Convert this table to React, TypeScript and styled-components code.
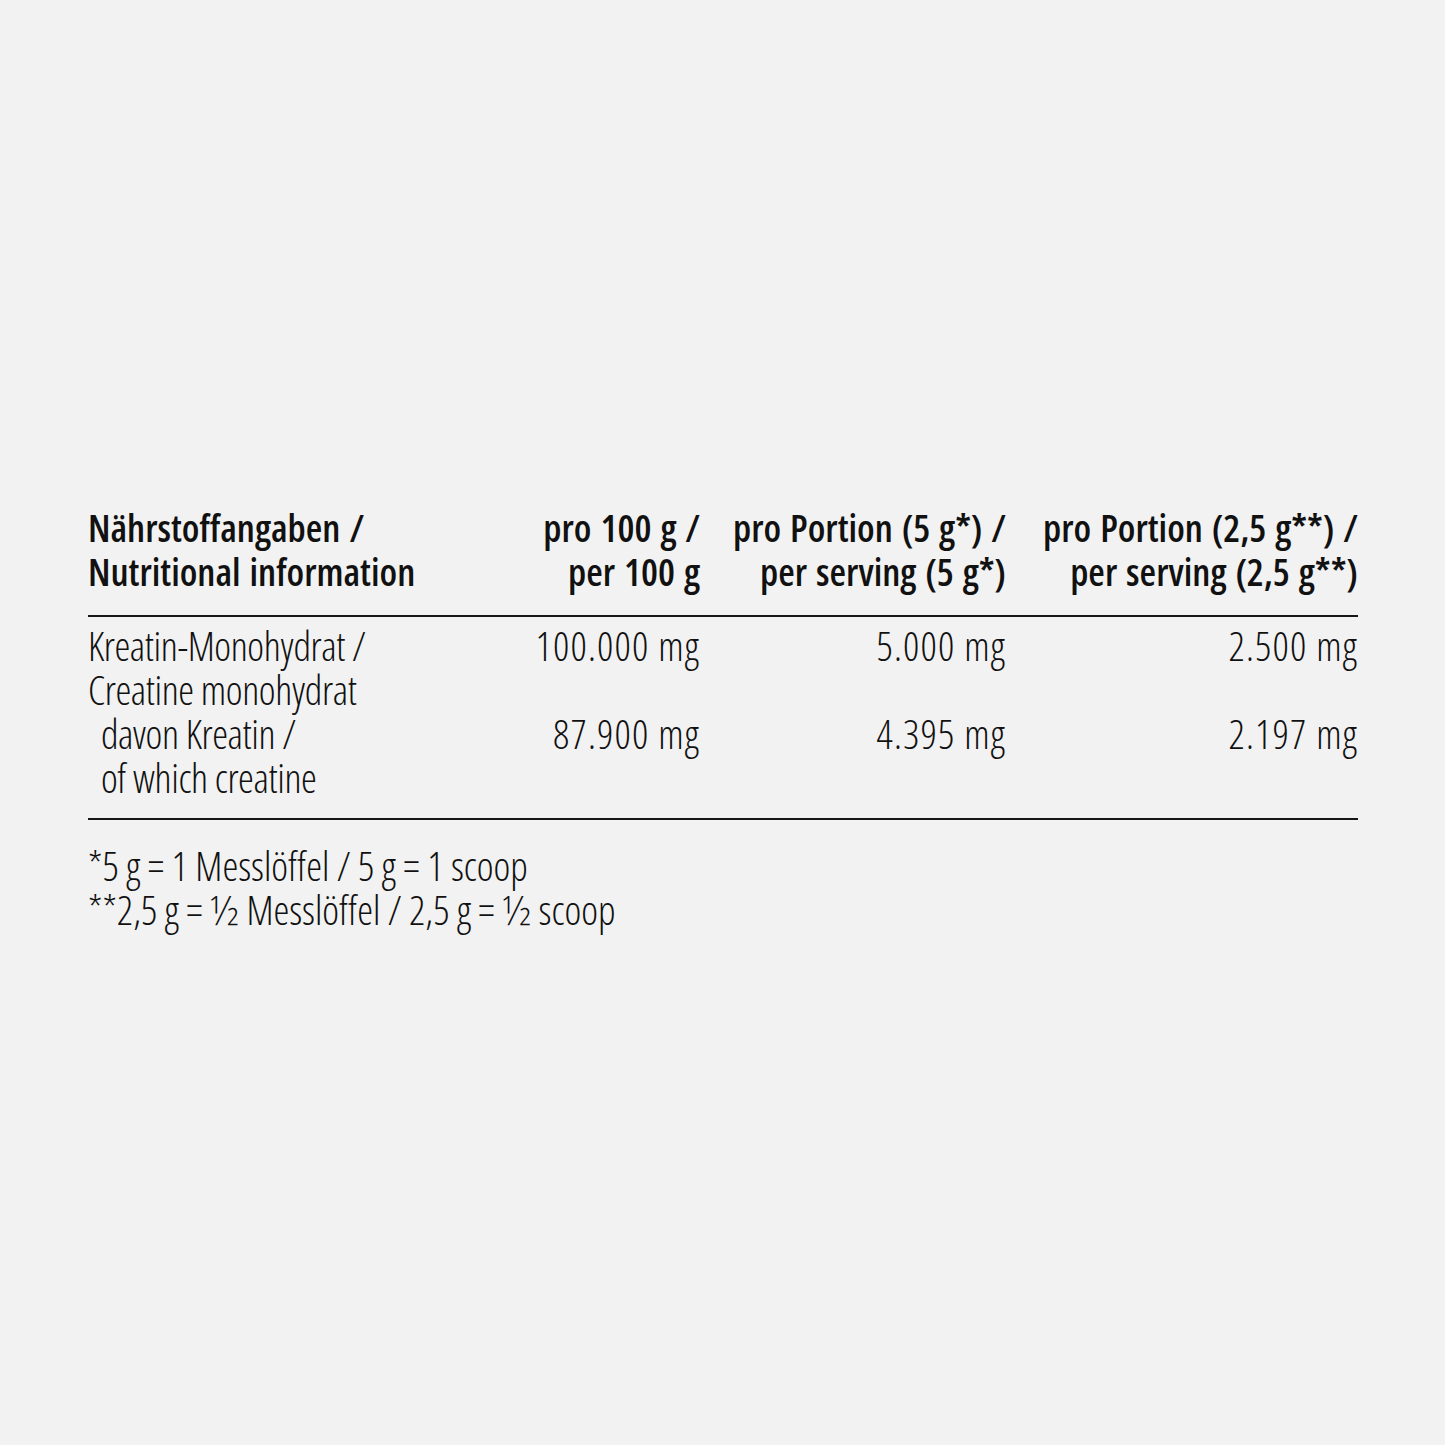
import styled, { createGlobalStyle } from 'styled-components';

const GlobalStyle = createGlobalStyle`
	html, body {
		margin: 0;
		padding: 0;
		background: #f2f2f2;
	}
	body {
		font-family: "Open Sans", "Roboto", "Liberation Sans", sans-serif;
		font-stretch: 75%;
		color: #111;
		-webkit-font-smoothing: antialiased;
	}
`;

type Row = {
	label: string[];
	values: string[];
	indent?: boolean;
};

const HEADERS: string[][] = [
	['Nährstoffangaben /', 'Nutritional information'],
	['pro 100 g /', 'per 100 g'],
	['pro Portion (5 g*) /', 'per serving (5 g*)'],
	['pro Portion (2,5 g**) /', 'per serving (2,5 g**)'],
];

const ROWS: Row[] = [
	{
		label: ['Kreatin-Monohydrat /', 'Creatine monohydrat'],
		values: ['100.000 mg', '5.000 mg', '2.500 mg'],
	},
	{
		label: ['davon Kreatin /', 'of which creatine'],
		values: ['87.900 mg', '4.395 mg', '2.197 mg'],
		indent: true,
	},
];

const FOOTNOTES = ['*5 g = 1 Messlöffel / 5 g = 1 scoop', '**2,5 g = ½ Messlöffel / 2,5 g = ½ scoop'];

const App = () => (
	<>
		<GlobalStyle />
		<Page>
			<Table>
				<HeadRow>
					{HEADERS.map((lines, i) => (
						<HeadCell key={i} alignRight={i > 0}>
							{lines.map((l) => (
								<Line key={l}>{l}</Line>
							))}
						</HeadCell>
					))}
				</HeadRow>
				<Body>
					{ROWS.map((row) => (
						<BodyRow key={row.label[0]}>
							<LabelCell indent={!!row.indent}>
								{row.label.map((l) => (
									<Line key={l}>{l}</Line>
								))}
							</LabelCell>
							{row.values.map((v, i) => (
								<ValueCell key={i}>{v}</ValueCell>
							))}
						</BodyRow>
					))}
				</Body>
			</Table>
			<Footnotes>
				{FOOTNOTES.map((f) => (
					<Line key={f}>{f}</Line>
				))}
			</Footnotes>
		</Page>
	</>
);

const Page = styled.div`
	min-height: 1445px;
	box-sizing: border-box;
	padding: 505px 87px 0 88px;
`;

const Table = styled.div`
	width: 100%;
`;

const Grid = styled.div`
	display: grid;
	grid-template-columns: minmax(0, 1fr) 260px 306px 352px;
`;

const HeadRow = styled(Grid)`
	padding-bottom: 22px;
	border-bottom: 2px solid #161616;
`;

const HeadCell = styled.div<{ alignRight: boolean }>`
	font-size: 38px;
	line-height: 44px;
	font-weight: 600;
	word-spacing: 2px;
	text-align: ${(props) => (props.alignRight ? 'right' : 'left')};
	white-space: nowrap;
`;

const Line = styled.div``;

const Body = styled.div`
	padding: 6.5px 0 18px;
	border-bottom: 2px solid #161616;
`;

const BodyRow = styled(Grid)`
	font-size: 40px;
	line-height: 44px;
	font-weight: 300;
	letter-spacing: -0.4px;
`;

const LabelCell = styled.div<{ indent: boolean }>`
	padding-left: ${(props) => (props.indent ? '13px' : '0')};
	white-space: nowrap;
`;

const ValueCell = styled.div`
	text-align: right;
	letter-spacing: 1.2px;
	white-space: nowrap;
`;

const Footnotes = styled.div`
	padding-top: 24px;
	font-size: 40px;
	line-height: 44px;
	font-weight: 300;
	white-space: nowrap;
`;

export default App;
